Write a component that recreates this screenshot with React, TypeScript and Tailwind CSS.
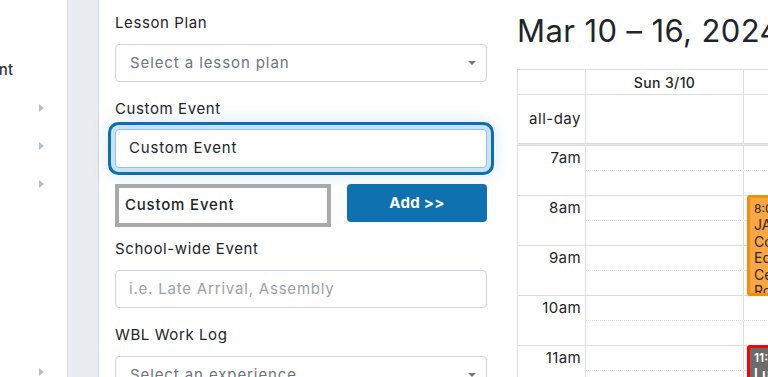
const font = "font-['Inter','Noto_Sans',sans-serif]"

const sideArrows = [104, 142, 180]

const Tri = () => (
  <span className="block w-0 h-0 border-y-[4px] border-y-transparent border-l-[5px] border-l-[#b7bec5]" />
)

const Sidebar = () => (
  <div className="relative w-[67px] shrink-0 bg-white">
    <div className="absolute left-0 top-[58px] w-[13px] h-[24px] overflow-hidden flex justify-end">
      <span className="whitespace-nowrap text-[15px] leading-[24px] font-medium text-[#2f3337]">Management</span>
    </div>
    {sideArrows.map(top => (
      <div key={top} className="absolute left-[39px]" style={{ top }}>
        <Tri />
      </div>
    ))}
    <div className="absolute left-[39px] top-[368px]">
      <Tri />
    </div>
  </div>
)

const Label = ({ children }: { children: React.ReactNode }) => (
  <div className="text-[15px] leading-[24px] text-[#212529] tracking-[0.6px]">{children}</div>
)

const Select = ({ placeholder }: { placeholder: string }) => (
  <div className="mt-[9px] h-[38px] rounded-[4px] border border-[#ced4da] bg-white flex items-center justify-between pl-[14px] pr-[10px]">
    <span className="text-[15px] text-[#6c757d] tracking-[0.9px]">{placeholder}</span>
    <span className="w-0 h-0 border-x-[4px] border-x-transparent border-t-[4px] border-t-[#777]" />
  </div>
)

const Form = () => (
  <div className="w-[372px] shrink-0 pt-[11px]">
    <Label>Lesson Plan</Label>
    <Select placeholder="Select a lesson plan" />

    <div className="mt-[15px]">
      <Label>Custom Event</Label>
      <div className="mt-[8px] h-[39px] rounded-[4px] border border-[#8fc2ec] bg-white flex items-center px-[13px] shadow-[0_0_0_4px_#c9e2f8,0_0_0_7px_#0f6fad,0_0_16px_9px_rgba(15,111,173,0.13)]">
        <span className="text-[15px] text-[#212529] tracking-[0.8px]">Custom Event</span>
      </div>
    </div>

    <div className="mt-[16px] flex gap-[16px]">
      <div className="w-[216px] h-[43px] border-[4px] border-[#a7a9ab] bg-white flex items-center px-[6px]">
        <span className="text-[15px] font-medium text-[#212529] tracking-[0.8px]">Custom Event</span>
      </div>
      <button className="w-[140px] h-[38px] rounded-[4px] bg-[#0f71b0] text-white text-[15px] font-bold tracking-[0.3px]">
        Add &gt;&gt;
      </button>
    </div>

    <div className="mt-[10px]">
      <Label>School-wide Event</Label>
      <div className="mt-[9px] h-[38px] rounded-[4px] border border-[#ced4da] bg-white flex items-center px-[13px]">
        <span className="text-[15px] text-[#9aa1a7] tracking-[0.8px]">i.e. Late Arrival, Assembly</span>
      </div>
    </div>

    <div className="mt-[15px]">
      <Label>WBL Work Log</Label>
      <Select placeholder="Select an experience" />
    </div>
  </div>
)

const hours = ['7am', '8am', '9am', '10am', '11am']

const Calendar = () => (
  <div className="flex-1 min-w-0 pl-[30px] overflow-hidden">
    <div className="h-[69px] pt-[10px] whitespace-nowrap text-[31px] leading-[42px] tracking-[0.4px] text-[#212529]">
      Mar 10 – 16, 2024
    </div>
    <div className="w-[400px] border-t border-l border-[#dddddd]">
      <div className="flex h-[25px] border-b border-[#dddddd]">
        <div className="w-[68px] border-r border-[#dddddd]" />
        <div className="w-[158px] border-r border-[#dddddd] flex items-center justify-center text-[14px] font-medium tracking-[0.4px] text-[#212529]">
          Sun 3/10
        </div>
        <div className="flex-1" />
      </div>
      <div className="flex h-[49px] border-b border-[#dddddd]">
        <div className="w-[68px] border-r border-[#dddddd] flex items-center justify-end pr-[4px] text-[15px] tracking-[0.5px] text-[#212529]">
          all-day
        </div>
        <div className="w-[158px] border-r border-[#dddddd]" />
        <div className="flex-1" />
      </div>
      <div className="h-[2px] bg-[#e8e8e8] border-b border-[#dddddd]" />
      <div className="relative">
        {hours.map(h => (
          <div key={h} className="flex h-[50px] border-b border-[#dddddd]">
            <div className="w-[68px] border-r border-[#dddddd] flex justify-end pr-[4px] pt-[1px] text-[15px] leading-[22px] tracking-[0.4px] text-[#212529]">
              {h}
            </div>
            <div className="flex-1 flex flex-col">
              <div className="h-[25px] border-b border-dotted border-[#dddddd] flex">
                <div className="w-[158px] border-r border-[#dddddd]" />
              </div>
              <div className="flex-1 flex">
                <div className="w-[158px] border-r border-[#dddddd]" />
              </div>
            </div>
          </div>
        ))}
        <div className="absolute left-[229px] top-[49px] w-[60px] h-[101px] rounded-[3px] border-[3px] border-[#f78b0c] bg-[#f9a643] pl-[4px] pt-[3px] overflow-hidden text-[#2b2b2b]">
          <div className="text-[12px] leading-[16px]">8:00</div>
          <div className="text-[14px] leading-[16.5px]">JAMES</div>
          <div className="text-[14px] leading-[16.5px]">Comm</div>
          <div className="text-[14px] leading-[16.5px]">Educ</div>
          <div className="text-[14px] leading-[16.5px]">Cent</div>
          <div className="text-[14px] leading-[16.5px]">Room</div>
        </div>
        <div className="absolute left-[229px] top-[199px] w-[60px] h-[60px] rounded-[3px] border-[3px] border-[#ff0000] bg-[#6b6b6b] pl-[4px] pt-[2px] overflow-hidden text-white">
          <div className="text-[12px] leading-[16px] font-semibold">11:00</div>
          <div className="text-[14px] leading-[16px] font-semibold">Lunch</div>
        </div>
      </div>
    </div>
  </div>
)

export default function App() {
  return (
    <div className={`${font} w-[768px] h-[377px] overflow-hidden flex bg-white`}>
      <Sidebar />
      <div className="w-[32px] shrink-0 bg-[#e9edf2] border-x border-[#d3d8de]" />
      <div className="flex-1 min-w-0 flex pl-[16px]">
        <Form />
        <Calendar />
      </div>
    </div>
  )
}
